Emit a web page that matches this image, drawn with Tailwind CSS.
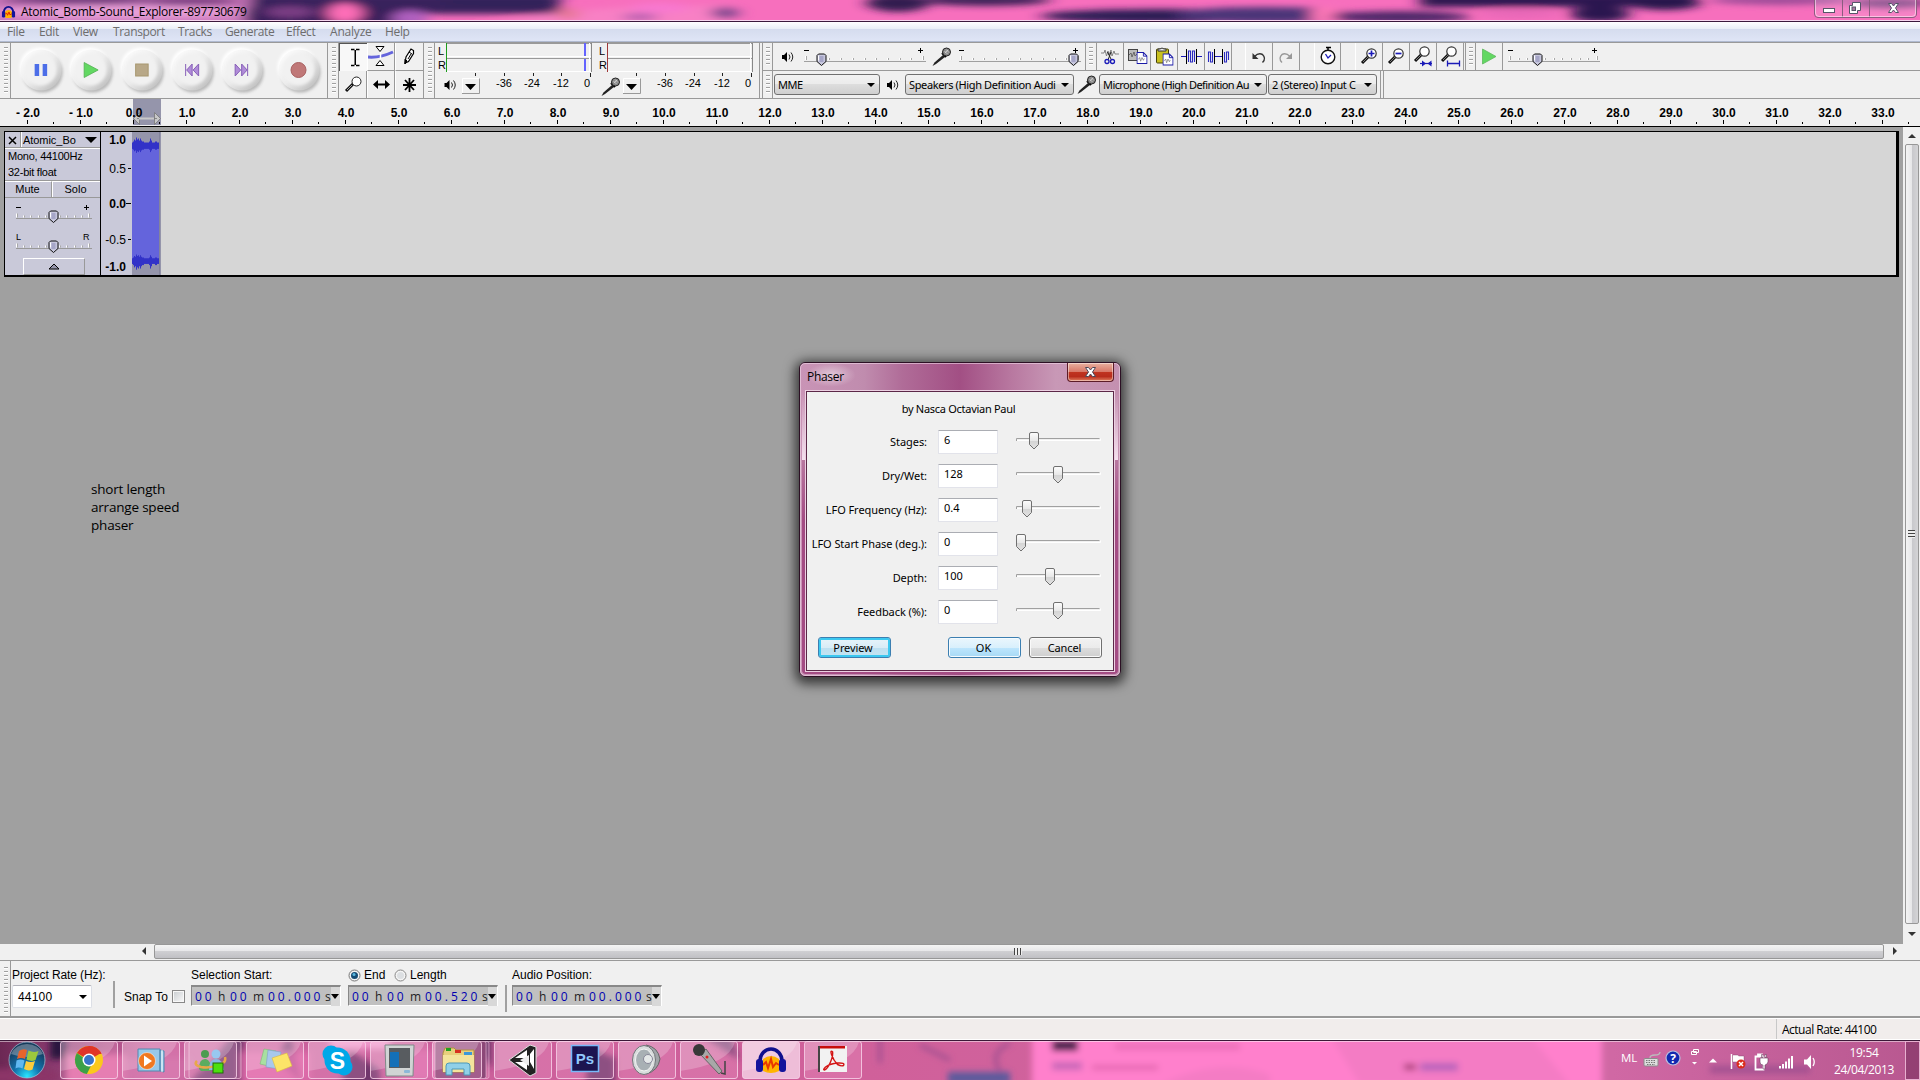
<!DOCTYPE html>
<html lang="en">
<head>
<meta charset="utf-8">
<title>Atomic_Bomb-Sound_Explorer-897730679</title>
<script src="https://cdn.jsdelivr.net/npm/@tailwindcss/browser@4"></script>
</head>
<body class="w-[1920px] h-[1080px] overflow-hidden relative flex flex-col bg-[#a0a0a0] font-['Liberation_Sans',Arial,sans-serif] text-black leading-none whitespace-nowrap">

<svg class="absolute w-0 h-0">
  <defs>
    <linearGradient id="gTask" x1="0" x2="1" y1="0" y2="0"><stop offset="0" stop-color="#6c2854"/><stop offset=".03" stop-color="#8c3c70"/><stop offset=".08" stop-color="#c8609c"/><stop offset=".45" stop-color="#d0609a"/><stop offset=".84" stop-color="#d068a4"/><stop offset="1" stop-color="#b85890"/></linearGradient>
    <filter id="b3" x="-5%" y="-50%" width="110%" height="200%"><feGaussianBlur stdDeviation="3"/></filter>
    <filter id="b7" x="-5%" y="-100%" width="110%" height="300%"><feGaussianBlur stdDeviation="8 3"/></filter>
    <filter id="b1" x="-20%" y="-20%" width="140%" height="140%"><feGaussianBlur stdDeviation="1.5"/></filter>
    <linearGradient id="gRim" x1="0" y1="0" x2="1" y2="1"><stop offset="0" stop-color="#fff"/><stop offset=".5" stop-color="#ececec"/><stop offset="1" stop-color="#b4b4b4"/></linearGradient>
    <linearGradient id="gThumb" x1="0" y1="0" x2="0" y2="1"><stop offset="0" stop-color="#fdfdfd"/><stop offset=".5" stop-color="#e8e8e8"/><stop offset=".5" stop-color="#d4d4d4"/><stop offset="1" stop-color="#e2e2e2"/></linearGradient>
    <radialGradient id="gOrb" cx=".5" cy=".95" r=".8"><stop offset="0" stop-color="#28e6ff"/><stop offset=".45" stop-color="#1274ae"/><stop offset="1" stop-color="#153a5c"/></radialGradient>
    <symbol id="disc" viewBox="0 0 50 50">
      <circle cx="26.500" cy="27.500" r="20" fill="#888" opacity=".55" filter="url(#b1)"/>
      <circle cx="23.500" cy="22.500" r="20" fill="#fff" filter="url(#b1)"/>
      <circle cx="25" cy="25" r="20.500" fill="url(#gRim)"/>
      <circle cx="24.500" cy="24.500" r="16" fill="#f1f1f1" filter="url(#b1)"/>
    </symbol>
    <symbol id="spk" viewBox="0 0 14 14">
      <path d="M1 5h2l3-3v10l-3-3h-2z" fill="#000"/><path d="M8 4.500q2 2.500 0 5M10 2.500q3.500 4.500 0 9" fill="none" stroke="#222"/>
    </symbol>
    <symbol id="mic" viewBox="0 0 20 20">
      <path d="M11 8l2 2L4 17L0.500 19L2.500 15.500z" fill="#222"/><path d="M10 6l4 4" stroke="#000" stroke-width="2"/>
      <circle cx="14.500" cy="5" r="4" fill="#888" stroke="#222"/><path d="M12.500 4l3 3M14 2.500l3 3M13 6l3-3" stroke="#ddd" stroke-width=".7"/>
    </symbol>
    <symbol id="mag" viewBox="0 0 27 27">
      <path d="M6 20l7-7" stroke="#111" stroke-width="3"/><path d="M7 19l5-5" stroke="#999" stroke-width=".8"/><circle cx="15.500" cy="10.500" r="4.700" fill="#fff" stroke="#333" stroke-width="1.200"/>
    </symbol>
    <symbol id="knob" viewBox="0 0 12 14">
      <path d="M1.500 3L3 1.500H9L10.500 3V9L6 13L1.500 9z" fill="#c6c6dc" stroke="#111"/><path d="M3 3v5" stroke="#fff"/><path d="M4 4.500h4M4 6.500h4M4 8.500h4" stroke="#7777a8" stroke-width=".8"/>
    </symbol>
    <symbol id="doc" viewBox="0 0 12 13"><path d="M.5.5h7l4 4v8h-11z" fill="#fff" stroke="#1a1aa8" stroke-width="1.200"/><path d="M7.500.5v4h4" fill="none" stroke="#1a1aa8"/><path d="M2 8l1.500-2 1 4 1.500-4 1.500 3 1-2" fill="none" stroke="#777" stroke-width=".8"/></symbol>
  </defs>
</svg>

<!-- title bar -->
<header class="relative h-[22px] shrink-0 overflow-hidden bg-[#f76fbd] border-b border-[#3c1a3c]">
  <svg class="absolute inset-0" width="1920" height="22">
    <g filter="url(#b7)">
      <rect x="-20" y="-6" width="270" height="40" fill="#cc78bc"/>
      <rect x="250" y="-6" width="310" height="20" fill="#38205c"/>
      <rect x="245" y="8" width="180" height="26" fill="#341a58"/>
      <ellipse cx="290" cy="12" rx="25" ry="6" fill="#7c3c84"/>
      <ellipse cx="345" cy="13" rx="18" ry="10" fill="#ff6eb8"/>
      <ellipse cx="410" cy="18" rx="18" ry="8" fill="#b060c0"/>
      <ellipse cx="80" cy="0" rx="80" ry="4" fill="#5c2c70"/>
      <ellipse cx="190" cy="1" rx="50" ry="4" fill="#6c3078"/>
      <ellipse cx="120" cy="12" rx="125" ry="6" fill="#e8a0d8"/>
      <path d="M470 30q80-26 260-24v24z" fill="#f880c4"/>
      <ellipse cx="500" cy="2" rx="60" ry="6" fill="#30205a"/>
      <ellipse cx="640" cy="17" rx="18" ry="4" fill="#b860b0"/>
      <ellipse cx="725" cy="13" rx="14" ry="6" fill="#804890"/>
      <ellipse cx="568" cy="14" rx="12" ry="6" fill="#e87898"/>
      <ellipse cx="660" cy="8" rx="30" ry="5" fill="#f878d0"/>
      <ellipse cx="898" cy="3" rx="32" ry="9" fill="#301a50"/>
      <ellipse cx="985" cy="0" rx="66" ry="6" fill="#3c2058"/>
      <ellipse cx="1160" cy="16" rx="120" ry="7" fill="#2c1c54"/>
      <ellipse cx="1265" cy="15" rx="90" ry="8" fill="#4c3478"/>
      <ellipse cx="1325" cy="15" rx="15" ry="8" fill="#ff78b8"/>
      <ellipse cx="1400" cy="17" rx="70" ry="6" fill="#4c2868"/>
      <rect x="1420" y="-6" width="275" height="13" fill="#2c1450"/>
      <ellipse cx="1520" cy="14" rx="40" ry="5" fill="#e868b8"/>
      <ellipse cx="1600" cy="14" rx="30" ry="8" fill="#2c1450"/>
      <ellipse cx="1665" cy="3" rx="36" ry="7" fill="#28124c"/>
      <ellipse cx="1780" cy="0" rx="70" ry="5" fill="#9c4c98"/>
      <ellipse cx="1890" cy="3" rx="40" ry="5" fill="#7a3c80"/>
    </g>
    <rect y="20" width="1920" height="1" fill="#f6d6ee"/>
    <path d="M1814.500 0v14q0 3.500 3.500 3.500h94q4.500 0 4.500-3.500v-14M1842.500 0v17M1869.500 0v17" fill="#fff" fill-opacity=".15" stroke="#8c5c80"/>
    <path d="M1815.500 0v13q0 3.500 3.500 3.500h93q3.500 0 3.500-3.500v-13" fill="none" stroke="#fff" stroke-opacity=".5"/>
    <rect x="1823.500" y="8.500" width="11" height="4" fill="#fff" stroke="#555568"/>
    <path d="M1852.500 2.500h8v8h-3v3h-8v-8h3z" fill="#fff" stroke="#555568"/><rect x="1852" y="7" width="3.500" height="3.500" fill="#a878a0" stroke="#555568"/>
    <path d="M1888.500 3.500h3l2 2.500l2-2.500h3l-3 4.500l3 4.500h-3l-2-2.500l-2 2.500h-3l3-4.500z" fill="#fff" stroke="#555568"/>
  </svg>
  <div class="relative flex items-center h-[21px] gap-[5px] pl-[1px] pt-[1px]">
    <svg width="15" height="15" viewBox="0 0 32 32"><path d="M6 18a10 12 0 0 1 20 0" fill="none" stroke="#10108c" stroke-width="4"/><path d="M8 17q8-8 16 0v11q-8 4-16 0z" fill="#ffb400"/><path d="M9 22l3-3 2 5 3-7 2 6 4-2" stroke="#e42000" stroke-width="2" fill="none"/><rect x="2" y="15" width="7" height="14" rx="3" fill="#14149c"/><rect x="23" y="15" width="7" height="14" rx="3" fill="#14149c"/></svg>
    <span class="font-['Open_Sans',sans-serif] text-[12px] tracking-[-0.270px] h-[15px] leading-[15px]">Atomic_Bomb-Sound_Explorer-897730679</span>
  </div>
</header>

<!-- menu -->
<nav class="h-[20px] shrink-0 flex items-center pl-[7px] text-[12px] text-[#6d6d6d] font-['Open_Sans',sans-serif] tracking-[-0.350px] bg-[linear-gradient(#fff,#e9eef6_7px,#d5dcee_7px,#dfe5f6_19px,#b0bad0_19px)]">
  <span class="w-[32px]">File</span><span class="w-[34px]">Edit</span><span class="w-[40px]">View</span><span class="w-[65px]">Transport</span><span class="w-[47px]">Tracks</span><span class="w-[61px]">Generate</span><span class="w-[44px]">Effect</span><span class="w-[55px] tracking-[-0.200px]">Analyze</span><span>Help</span>
</nav>

<!-- toolbars -->
<section class="h-[57px] shrink-0 flex bg-[#f0f0f0] border-y border-[#999]">
  <div class="w-[11px] border-r border-[#999] pl-[4px] py-[4px]"><div class="w-[4px] h-[47px] bg-[repeating-linear-gradient(#a0a0a0_0_1px,#fff_1px_2px,#f0f0f0_2px_4px)]"></div></div>
  <div class="w-[317px] border-r border-[#999] flex pl-[5px] pt-[2px]">
    <svg class="w-[50.300px] h-[50px]" viewBox="0 0 50 50"><use href="#disc"/><path d="M18.500 19h4.500v12h-4.500zM26.500 19h4.500v12h-4.500z" fill="#4c6ee8"/></svg>
    <svg class="w-[50.300px] h-[50px]" viewBox="0 0 50 50"><use href="#disc"/><path d="M18 17.500L32 25L18 32.500z" fill="#62d862" stroke="#50b050" stroke-width=".8"/></svg>
    <svg class="w-[50.300px] h-[50px]" viewBox="0 0 50 50"><use href="#disc"/><rect x="18.500" y="19" width="12.500" height="12" fill="#b8a888" stroke="#a89870"/></svg>
    <svg class="w-[50.300px] h-[50px]" viewBox="0 0 50 50"><use href="#disc"/><path d="M18.500 19v12M25 19L19.500 25L25 31zM31.500 19L26 25L31.500 31z" fill="#b08cd8" stroke="#8860b8"/></svg>
    <svg class="w-[50.300px] h-[50px]" viewBox="0 0 50 50"><use href="#disc"/><path d="M30.500 19v12M18 19L23.500 25L18 31zM24.500 19L30 25L24.500 31z" fill="#b08cd8" stroke="#8860b8"/></svg>
    <svg class="w-[50px] h-[50px] ml-[7px]" viewBox="0 0 50 50"><use href="#disc"/><circle cx="24.500" cy="25" r="7.500" fill="#c07878" stroke="#a86060"/></svg>
  </div>
  <div class="w-[11px] border-r border-[#999] pl-[4px] py-[4px]"><div class="w-[4px] h-[47px] bg-[repeating-linear-gradient(#a0a0a0_0_1px,#fff_1px_2px,#f0f0f0_2px_4px)]"></div></div>
  <!-- tools -->
  <div class="w-[85px] grid grid-cols-3 grid-rows-2 border-r border-[#999]">
    <div class="bg-[#f8f8f8] border-t border-l border-[#555] flex"><svg width="27" height="27"><path d="M11 5.500h3.500M16 5.500h3.500M15.250 6v15M11 21.500h3.500M16 21.500h3.500" stroke="#000" stroke-width="1.500" fill="none"/></svg></div>
    <div class="border-r border-b border-[#999] border-l border-l-white flex"><svg width="27" height="27"><path d="M0 14q12 1 25-5" stroke="#6464dc" stroke-width="3" fill="none"/><path d="M8 3.500h8l-4 5zM8 22.500h8l-4-5z" fill="#fff" stroke="#000"/><path d="M12.500 9v7" stroke="#fff" stroke-width="1.500"/></svg></div>
    <div class="border-b border-[#999] border-l border-l-white flex"><svg width="27" height="27"><path d="M9 20l1-6 5-8 2.500 1.500v3l-5 8z" fill="#fff" stroke="#000" stroke-width="1.200"/><path d="M9 21v-5l2 2zM13 9l3 2M12 16l3-5" stroke="#000"/></svg></div>
    <div class="border-r border-[#999] flex"><svg width="27" height="27"><path d="M7 20l7-7" stroke="#111" stroke-width="3"/><path d="M8 19l5-5" stroke="#ccc" stroke-width=".8"/><circle cx="17.500" cy="10.500" r="4.500" fill="#fff" stroke="#222"/></svg></div>
    <div class="border-r border-[#999] border-l border-l-white flex"><svg width="27" height="27"><path d="M7 13.500h13" stroke="#000" stroke-width="2"/><path d="M5 13.500l5-4.500v9zM22 13.500l-5-4.500v9z"/></svg></div>
    <div class="border-l border-white flex"><svg width="27" height="27"><path d="M13.500 7v14M7 14h13M9 9l9 10M18 9l-9 10" stroke="#000" stroke-width="1.800"/></svg></div>
  </div>
  <div class="w-[11px] border-r border-[#999] pl-[4px] py-[4px]"><div class="w-[4px] h-[47px] bg-[repeating-linear-gradient(#a0a0a0_0_1px,#fff_1px_2px,#f0f0f0_2px_4px)]"></div></div>
  <!-- meters -->
  <div class="w-[325px] border-r border-[#999] flex" id="meters"></div>
  <!-- right-hand toolbars -->
  <div class="flex-1 flex flex-col ml-[2px] border-l border-[#999]">
    <div class="h-[28px] flex border-b border-[#999]">
      <div class="w-[10px] border-r border-[#999] pl-[3px] pt-[4px]"><div class="w-[4px] h-[19px] bg-[repeating-linear-gradient(#a0a0a0_0_1px,#fff_1px_2px,#f0f0f0_2px_4px)]"></div></div>
      <div class="w-[313px] border-r border-[#999] flex items-center pl-[8px]">
        <svg width="15" height="14"><use href="#spk" width="14" height="14"/></svg>
        <div class="ml-[8px]" data-slider="122,17.5"></div>
        <svg class="ml-[6px]" width="20" height="20"><use href="#mic" width="20" height="20"/></svg>
        <div class="ml-[7px]" data-slider="122,114.500"></div>
      </div>
      <div class="w-[11px] border-r border-[#999] pl-[3px] pt-[4px]"><div class="w-[4px] h-[19px] bg-[repeating-linear-gradient(#a0a0a0_0_1px,#fff_1px_2px,#f0f0f0_2px_4px)]"></div></div>
      <div class="flex">
        <div class="w-[27px] border-r border-[#999]"><svg width="26" height="27"><path d="M4 10h3l1-3 1.500 6 1.500-5 1 4 2-5 1 6 2-5 1 3h4" stroke="#777" fill="none" stroke-width=".9"/><path d="M14 9l-3 8M10.500 9l4 8" stroke="#222"/><circle cx="10" cy="18.500" r="2" fill="none" stroke="#1a1ab8" stroke-width="1.300"/><circle cx="15.500" cy="18.500" r="2" fill="none" stroke="#1a1ab8" stroke-width="1.300"/></svg></div>
        <div class="w-[27px] border-r border-[#999]"><svg width="26" height="27"><rect x="4.500" y="6.500" width="9" height="11" fill="#bbb" stroke="#444"/><path d="M5 12l2-2 1 4 2-5 1 4 2-2" stroke="#666" fill="none"/><use href="#doc" x="12.500" y="8.500" width="11" height="13"/></svg></div>
        <div class="w-[27px] border-r border-[#999]"><svg width="26" height="27"><rect x="5.500" y="6" width="12" height="14" rx="1" fill="#c8c020" stroke="#44400a"/><path d="M7 8h8v-2h-2q-2-2-4 0h-2z" fill="#eee" stroke="#333"/><use href="#doc" x="11.500" y="10" width="11" height="13"/></svg></div>
        <div class="w-[27px] border-r border-[#999]"><svg width="26" height="27"><path d="M3 13.500h5M19 13.500h5" stroke="#1a1ab8"/><path d="M8.500 6v15M18.500 6v15" stroke="#000"/><path d="M10.500 19v-11h2v11h2v-11h2v11" stroke="#2a2ac0" fill="none" stroke-width="1.100"/></svg></div>
        <div class="w-[27px] border-r border-[#999]"><svg width="26" height="27"><path d="M9 13.500h8" stroke="#1a1ab8"/><path d="M9.500 6v15M17.500 6v15" stroke="#000"/><path d="M3.500 19v-10h2v10h2v-10M19.500 9v10h2v-10h2v8" stroke="#2a2ac0" fill="none" stroke-width="1.100"/></svg></div>
        <div class="w-[13px]"></div>
        <div class="w-[28px] border-x border-[#999] border-l-white"><svg width="26" height="27"><path d="M8.500 13.500q4-4 8-2q4 4 0 8" stroke="#333" fill="none" stroke-width="1.400"/><path d="M6.500 10v6h6z" fill="#333"/></svg></div>
        <div class="w-[27px] border-r border-[#999]"><svg width="26" height="27"><path d="M17 13.500q-4-4-8-2q-4 4 0 8" stroke="#999" fill="none" stroke-width="1.400"/><path d="M19 10v6h-6z" fill="#999"/></svg></div>
        <div class="w-[14px]"></div>
        <div class="w-[27px] border-x border-[#999] border-l-white"><svg width="25" height="27"><path d="M13 4v4M11 4.500h5" stroke="#000" stroke-width="1.500"/><circle cx="13" cy="14" r="6.800" fill="#fff" stroke="#111" stroke-width="1.400"/><path d="M10.500 11l2.500 4 3-3" stroke="#1a1ab8" fill="none" stroke-width="1.300"/></svg></div>
        <div class="w-[14px]"></div>
        <div class="w-[28px] border-x border-[#999] border-l-white"><svg width="26" height="27"><use href="#mag" width="27" height="27"/><path d="M12.500 10.500h6M15.500 7.500v6" stroke="#1a1ab8" stroke-width="1.700"/></svg></div>
        <div class="w-[27px] border-r border-[#999]"><svg width="26" height="27"><use href="#mag" width="27" height="27"/><path d="M12.500 10.500h6" stroke="#1a1ab8" stroke-width="1.700"/></svg></div>
        <div class="w-[27px] border-r border-[#999]"><svg width="26" height="27"><use href="#mag" x="-1" y="-2" width="27" height="27"/><path d="M10 20.500h12" stroke="#1a1ab8" stroke-width="1.200"/><path d="M16 20.500l-4-3v6zM17.500 20.500l4-3v6z" fill="#1a1ab8"/></svg></div>
        <div class="w-[27px] border-r border-[#999]"><svg width="26" height="27"><use href="#mag" x="-1" y="-2" width="27" height="27"/><path d="M10.500 20.500h12M10.500 17.500v6M22.500 17.500v6" stroke="#1a1ab8" stroke-width="1.300"/></svg></div>
      </div>
      <div class="w-[11px] ml-[1px] border-x border-[#999] pl-[3px] pt-[4px]"><div class="w-[4px] h-[19px] bg-[repeating-linear-gradient(#a0a0a0_0_1px,#fff_1px_2px,#f0f0f0_2px_4px)]"></div></div>
      <div class="w-[27px] border-r border-[#999]"><svg width="26" height="27"><path d="M6.500 6L20 13.500L6.500 21z" fill="#62d862" stroke="#60b860" stroke-width=".8"/></svg></div>
      <div class="ml-[5px]" data-slider="92,29.500"></div>
    </div>
    <div class="h-[27px] flex items-center text-[11px] font-['Noto_Sans',sans-serif]">
      <div class="w-[10px] h-full border-r border-[#999] pl-[3px] pt-[4px]"><div class="w-[4px] h-[19px] bg-[repeating-linear-gradient(#a0a0a0_0_1px,#fff_1px_2px,#f0f0f0_2px_4px)]"></div></div>
      <div class="ml-[1px] w-[106px] h-[21px] rounded-[3px] border border-[#707070] bg-[linear-gradient(#f2f2f2,#ebebeb_50%,#dddddd_50%,#cfcfcf)] flex items-center pl-[3px]"><span class="w-[89px] leading-[16px] tracking-[-0.500px]">MME</span><svg width="8" height="4"><path d="M0 0h8l-4 4z"/></svg></div>
      <svg class="ml-[6px]" width="14" height="14"><use href="#spk" width="14" height="14"/></svg>
      <div class="ml-[5px] w-[169px] h-[21px] rounded-[3px] border border-[#707070] bg-[linear-gradient(#f2f2f2,#ebebeb_50%,#dddddd_50%,#cfcfcf)] flex items-center pl-[3px]"><span class="w-[145px] mr-[7px] leading-[16px] tracking-[-0.370px]">Speakers (High Definition Audi</span><svg width="8" height="4"><path d="M0 0h8l-4 4z"/></svg></div>
      <svg class="ml-[3px]" width="20" height="20"><use href="#mic" width="20" height="20"/></svg>
      <div class="ml-[2px] w-[168px] h-[21px] rounded-[3px] border border-[#707070] bg-[linear-gradient(#f2f2f2,#ebebeb_50%,#dddddd_50%,#cfcfcf)] flex items-center pl-[3px]"><span class="w-[145px] mr-[6px] leading-[16px] tracking-[-0.580px]">Microphone (High Definition Au</span><svg width="8" height="4"><path d="M0 0h8l-4 4z"/></svg></div>
      <div class="ml-[1px] w-[109px] h-[21px] rounded-[3px] border border-[#707070] bg-[linear-gradient(#f2f2f2,#ebebeb_50%,#dddddd_50%,#cfcfcf)] flex items-center pl-[3px]"><span class="w-[86px] mr-[6px] leading-[16px] tracking-[-0.350px]">2 (Stereo) Input C</span><svg width="8" height="4"><path d="M0 0h8l-4 4z"/></svg></div>
      <div class="ml-[3px] w-[4px] h-full border-x border-[#999]"></div>
    </div>
  </div>
</section>

<!-- time ruler -->
<section class="relative h-[28px] shrink-0 bg-[#f0f0f0] border-b border-black">
  <div class="absolute left-[133px] top-0 w-[28px] h-[26px] bg-[#9595ab]"></div>
  <svg class="absolute inset-0" width="1920" height="27" id="ticks"></svg>
  <div class="relative flex pl-[1.500px] pt-[8px] text-[12px] font-bold" id="labels"></div>
</section>

<!-- track area -->
<main class="h-[817px] shrink-0 flex">
  <div class="w-[1903px] pt-[4px] pl-[4px]">
    <div class="w-[1895px] h-[146px] border-t border-l border-black border-b-2 border-r-[3px] flex">
      <div class="w-[95px] bg-[#c9c9d9] flex flex-col text-[11px]">
        <div class="h-[16px] flex border-b border-[#999]">
          <div class="w-[16px] border-r border-[#999] flex items-center justify-center pt-[1px]"><svg width="9" height="9"><path d="M1 1l7 7M8 1l-7 7" stroke="#000" stroke-width="1.500"/></svg></div>
          <div class="flex-1 border-l border-white flex items-center pl-[1px] pt-[1px]"><span class="w-[62px] text-[11px] tracking-[-0.050px]">Atomic_Bo</span><svg width="12" height="7"><path d="M0 0h12l-6 6z"/></svg></div>
        </div>
        <div class="h-[33px] pl-[3px] pt-[1px] border-b border-[#999] border-t border-t-white tracking-[-0.250px]"><p class="h-[16px] leading-[13px]">Mono, 44100Hz</p><p class="leading-[13px]">32-bit float</p></div>
        <div class="h-[17px] flex border-b border-[#999] text-center leading-[15px]"><div class="w-[47px] border-r border-[#999] border-t border-t-white pr-[1px]">Mute</div><div class="flex-1 border-l border-white border-t pr-[2px]">Solo</div></div>
        <svg width="95" height="60" class="h-[60px]" id="trackSliders"></svg>
        <div class="ml-[18px] w-[62px] h-[17px] border border-white border-r-[#999] border-b-[#999] flex items-center justify-center"><svg width="12" height="7"><path d="M1 6h10l-5-5z" fill="#9595ab" stroke="#000"/></svg></div>
      </div>
      <div class="relative w-[32px] border-l border-black bg-[#c9c9d9] text-[12px] text-right pr-[6px]">
        <p class="pt-[2px] font-bold">1.0</p><p class="pt-[17px]">0.5</p><p class="pt-[23px] font-bold">0.0</p><p class="pt-[24px]">-0.5</p><p class="pt-[15px] font-bold">-1.0</p>
        <div class="absolute right-[1px] top-[36px] w-[3px] h-px bg-black"></div><div class="absolute right-[1px] top-[71px] w-[5px] h-px bg-black"></div><div class="absolute right-[1px] top-[107px] w-[3px] h-px bg-black"></div>
      </div>
      <svg width="29" height="143" id="wave" class="shrink-0 bg-[#9595ab]"></svg>
      <div class="flex-1 bg-[#d6d6d6]"></div>
    </div>
  </div>
  <div class="w-[17px] bg-[#f0f0f0] flex flex-col items-center">
    <svg width="17" height="17"><path d="M5 11h8l-4-4z" fill="#333"/></svg>
    <div class="w-[14px] h-[780px] rounded-[2px] border border-[#979797] bg-[linear-gradient(90deg,#f4f4f4,#e6e6e8_50%,#c8c8cc_50%,#d4d4d6)] flex items-center justify-center"><div class="w-[7px] h-[8px] bg-[repeating-linear-gradient(#444_0_1px,#eee_1px_3px)]"></div></div>
    <svg width="17" height="17"><path d="M5 8h8l-4 4z" fill="#333"/></svg>
  </div>
</main>
<div class="h-[16px] shrink-0 bg-[#f0f0f0] flex pl-[137px]">
  <svg width="17" height="15"><path d="M9 3v8l-4-4z" fill="#333"/></svg>
  <div class="w-[1730px] h-[15px] rounded-[2px] border border-[#979797] bg-[linear-gradient(#f4f4f4,#e6e6e8_50%,#cfcfd2_50%,#c0c0c4)] flex items-center justify-center pr-[3px]"><div class="w-[8px] h-[7px] bg-[repeating-linear-gradient(90deg,#444_0_1px,#eee_1px_3px)]"></div></div>
  <svg width="17" height="15"><path d="M9 3v8l4-4z" fill="#333"/></svg>
</div>

<!-- selection toolbar -->
<section class="h-[58px] shrink-0 bg-[#f0f0f0] border-t border-b-2 border-[#999] flex text-[12px]">
  <div class="w-[11px] border-r border-[#999] pl-[4px] pt-[6px]"><div class="w-[4px] h-[46px] bg-[repeating-linear-gradient(#a0a0a0_0_1px,#fff_1px_2px,#f0f0f0_2px_4px)]"></div></div>
  <div class="w-[102px] pl-[1px] pt-[8px] tracking-[-0.100px]"><p>Project Rate (Hz):</p>
    <div class="mt-[4px] w-[80px] h-[23px] bg-white border border-[#dcdfe6] border-t-[#b0b0b8] rounded-[2px] flex items-center pl-[5px]"><span class="w-[61px] tracking-[0.200px]">44100</span><svg width="8" height="4"><path d="M0 0h8l-4 4z"/></svg></div></div>
  <div class="w-[78px] flex items-center pt-[16px]"><div class="w-[2px] h-[27px] -mt-[5px] bg-[#a0a0a0]"></div><span class="w-[48px] ml-[9px]">Snap To</span><div class="w-[13px] h-[13px] border border-[#888] bg-[linear-gradient(135deg,#c8ccd0,#fafafa)] outline outline-1 outline-[#f8f8f8] outline-offset-[-2px]"></div></div>
  <div class="w-[157px] pt-[8px]"><p>Selection Start:</p><div class="mt-[4px]" data-time="00.000"></div></div>
  <div class="w-[157px] pt-[8px]"><div class="flex items-center h-[12px]"><svg width="13" height="13" class="mr-[3px]"><circle cx="6.500" cy="6.500" r="5.500" fill="#f4f4f4" stroke="#777"/><circle cx="6.500" cy="6.500" r="3.500" fill="#154c74"/><circle cx="6" cy="5.500" r="1.500" fill="#58b8e0"/></svg><span class="w-[30px]">End</span><svg width="13" height="13" class="mr-[3px]"><circle cx="6.500" cy="6.500" r="5.500" fill="#f4f4f4" stroke="#888"/><circle cx="6.500" cy="6.500" r="3.500" fill="#dcdfe2"/></svg>Length</div><div class="mt-[4px]" data-time="00.520"></div></div>
  <div class="w-[7px] pt-[24px]"><div class="w-[2px] h-[27px] bg-[#a0a0a0]"></div></div>
  <div class="pt-[8px]"><p>Audio Position:</p><div class="mt-[4px]" data-time="00.000"></div></div>
</section>
<footer class="h-[22px] shrink-0 bg-[#f1edec] border-y border-white flex justify-end"><div class="w-[144px] border-l border-[#c8c8c8] pl-[5px] text-[12px] leading-[21px] font-['Open_Sans',sans-serif] tracking-[-0.500px]">Actual Rate: 44100</div></footer>

<!-- taskbar -->
<section class="relative h-[40px] shrink-0 overflow-hidden">
  <svg class="absolute inset-0" width="1920" height="40">
    <rect width="1920" height="40" fill="url(#gTask)"/>
    <g filter="url(#b3)">
      <rect x="1032" y="-10" width="570" height="60" fill="#ff80cc"/>
      <path d="M1330 -5h200l40 50h-210z" fill="#f47cc4"/>
      <path d="M1160 45q60-30 110-10v15z" fill="#f47cc4"/>
      <rect x="50" y="-5" width="16" height="24" fill="#2c1440"/>
      <ellipse cx="20" cy="36" rx="40" ry="8" fill="#8c3468"/>
      <rect x="66" y="14" width="60" height="30" fill="#e070a8"/>
      <path d="M185 45l25-22l22-28h12v50zM350 10l30 20v20h-40zM470-5l22 35v-35zM590 8l25 10v30h-30zM290-5l-15 24l28 25zM700 -5l30 0l10 25z" fill="#5a2a60" opacity=".8"/>
      <rect x="240" y="12" width="70" height="30" fill="#e870b0" opacity=".7"/><rect x="330" y="-5" width="60" height="14" fill="#f098cc"/><rect x="120" y="18" width="70" height="24" fill="#d070a8" opacity=".6"/><rect x="400" y="10" width="70" height="30" fill="#e070b0" opacity=".7"/>
      <rect x="1052" y="0" width="26" height="11" fill="#3a1c44"/>
      <rect x="1052" y="22" width="30" height="8" fill="#c868b8"/><rect x="1092" y="25" width="66" height="5" fill="#e468b0"/>
      <rect x="1115" y="3" width="125" height="7" fill="#ec70b8"/>
      <rect x="1404" y="24" width="12" height="6" fill="#a83c78"/><rect x="1420" y="23" width="38" height="8" fill="#b864bc"/>
      <path d="M1010 3q-22 10-10 28M920 5l30 15M880-5v28" stroke="#a05090" stroke-width="4" fill="none"/>
      <rect x="948" y="32" width="62" height="12" fill="#5c5a9c"/>
      <rect x="1710" y="26" width="100" height="7" fill="#a05090"/>
    </g>
    <rect width="1920" height="1" fill="#3c1838"/><rect y="1" width="1920" height="1" fill="#fff" opacity=".5"/>
    <rect x="1905.500" y="1.500" width="14" height="38" fill="#7c3060" fill-opacity=".6" stroke="#e8b0d0"/>
  </svg>
  <div class="relative flex">
    <svg width="60" height="40"><circle cx="27" cy="20" r="18" fill="url(#gOrb)" stroke="#a8c4d8" stroke-opacity=".7"/><path d="M11 14a17 15 0 0 1 32 0q-16 6-32 0z" fill="#fff" opacity=".3"/>
      <path d="M19 11q4-3 8-1l-2 9q-4-2-8 0z" fill="#e8642c"/><path d="M28.500 10.500q5 2.500 10 .5l-3 9q-4 2-9-.5z" fill="#9cc83c"/><path d="M16.500 20.500q4-2 8 0l-2 8q-4-2-7 0z" fill="#60b8f0"/><path d="M26 21q5 2 9 0l-2.500 8.500q-4 2-8.500-.5z" fill="#fccc3c"/></svg>
    <div class="flex gap-[4px]" id="tasks"></div>
  </div>
  <div class="absolute right-0 top-0 h-[40px] w-[300px] text-white font-['Open_Sans',sans-serif] text-[12px]">
    <svg class="absolute inset-0" width="300" height="40">
      <path d="M34 17q0-3 5-3t5-3" stroke="#bbb" fill="none" stroke-width="1.300" transform="translate(-4 1)"/><rect x="24" y="18.500" width="14" height="7.500" rx="1" fill="#ddd" stroke="#8c8c8c"/><path d="M26 20.500h10M26 22.500h10M27 24.500h8" stroke="#777" stroke-dasharray="1.500 1"/>
      <circle cx="53" cy="18" r="7" fill="#1228b0" stroke="#b8c0e0" stroke-width="1.200"/><text x="53" y="22.500" text-anchor="middle" font-size="12" font-weight="bold" fill="#fff">?</text>
      <path d="M73.500 9.500h5v3h-5zM71.500 11.500h5v3h-5z" fill="#b86090" stroke="#fff"/><path d="M72 22h5l-2.500 2.500zM89 22.500h8l-4-4z" fill="#fff"/>
      <path d="M111.500 14v15" stroke="#fff" stroke-width="1.500"/><path d="M112.500 15h5l1.500 1h5v7h-5l-1.500-1h-5z" fill="#fff" stroke="#7c4068" stroke-width=".4"/><circle cx="121" cy="24" r="4.500" fill="#dc2c1c"/><path d="M119 22l4 4M123 22l-4 4" stroke="#fff" stroke-width="1.500"/>
      <path d="M135.500 16.500h8v13h-8zM138 14.500h4v2h-4z" fill="none" stroke="#fff" stroke-width="1.800"/><path d="M140 18h8v4q-1 3-3 3v4h-2v-4q-3 0-3-3zM141.500 14.500h1.500v3h-1.500zM145 14.500h1.500v3h-1.500z" fill="#fff" stroke="#6c3c60" stroke-width=".6"/>
      <path d="M159 26h2v2.500h-2zM162 24h2v4.500h-2zM165 21.500h2v7h-2zM168 18.500h2v10h-2zM171 16h2v12.500h-2z" fill="#fff"/>
      <path d="M184 19.500h3l4-4.500v14l-4-4.500h-3z" fill="#fff"/><path d="M193 18q2.500 4 0 8" stroke="#fff" fill="none" stroke-width="1.300"/>
    </svg>
    <div class="relative flex h-[40px]"><span class="w-[195px] pl-[1px] pt-[12px] text-[11.500px]">ML</span><div class="w-[98px] text-center pt-[4px] leading-[17px] tracking-[-0.350px]"><p>19:54</p><p>24/04/2013</p></div></div>
  </div>
</section>

<!-- note on the desktop -->
<div class="absolute left-[91px] top-[480px] text-[13.500px] leading-[18px] font-['Open_Sans',sans-serif] tracking-[-0.200px]">short length<br>arrange speed<br>phaser</div>

<!-- Phaser dialog -->
<div class="absolute left-[799px] top-[362px] w-[322px] h-[315px] rounded-[6px] border border-[#2c1024] p-[6px] pt-0 shadow-[0_3px_12px_4px_rgba(0,0,0,0.65)] bg-[linear-gradient(90deg,#c994b6,#c08cae_20%,#b06c98_32%,#a24f84_50%,#b878a0_66%,#c898b6_80%,#c490b0)] outline outline-1 outline-[#f0d8e8]/60 outline-offset-[-2px]">
  <div class="absolute inset-x-[2px] top-[97px] bottom-[2px] bg-[linear-gradient(#b878a0,#a44c84_60px,#a44c84)] rounded-b-[4px]"></div>
  <div class="absolute inset-x-[2px] top-[30px] h-[67px] bg-[linear-gradient(#c898b800,#f4e0ee)]"></div>
  <div class="relative h-[28px] flex justify-between font-['Open_Sans',sans-serif] text-[12px]"><span class="pt-[6px] pl-[1px] leading-[16px] tracking-[-0.300px] pr-3 h-[24px] bg-[radial-gradient(ellipse_at_center,rgba(255,255,255,.5),transparent_70%)]">Phaser</span>
    <div class="w-[47px] h-[19px] rounded-b-[4px] border border-t-0 border-[#5c1c28] bg-[linear-gradient(#e8b0a0,#d87868_48%,#c03420_50%,#b82c1c_75%,#e08060)] flex justify-center shadow-[inset_0_0_0_1px_rgba(255,255,255,.45)]"><svg width="13" height="13" class="mt-[3px]"><path d="M1.500 1.500h3l2 2.500l2-2.500h3l-3 4.500l3 4.500h-3l-2-2.500l-2 2.500h-3l3-4.500z" fill="#fff" stroke="#4c4858"/></svg></div></div>
  <div class="relative h-[280px] border border-[#5c2848] bg-[#f0f0f0] outline outline-1 outline-[#ecd0e2] text-[11px] font-['Noto_Sans',sans-serif] flex flex-col">
    <p class="text-center pt-[9px] leading-[16px] tracking-[-0.280px] pr-[3px]">by Nasca Octavian Paul</p>
    <div class="mt-[13px] flex flex-col gap-[10px]" id="rows"></div>
    <div class="mt-[13px] flex pl-[11px] leading-[19px] text-center">
      <div class="w-[73px] h-[21px] rounded-[3px] border border-[#3c7fb1] bg-[linear-gradient(#e8f4fa,#d8ecf6_50%,#bcdff0_50%,#c4e4f2)] shadow-[inset_0_0_0_2px_#3cc8f0] pr-[3px] tracking-[-0.100px]">Preview</div>
      <div class="ml-[57px] w-[73px] h-[21px] rounded-[3px] border border-[#3c7fb1] bg-[linear-gradient(#eaf6fd,#d9f0fc_50%,#bee6fd_50%,#a7d9f5)] shadow-[inset_0_0_0_1px_#f4fbff] pr-[2px]">OK</div>
      <div class="ml-[8px] w-[73px] h-[21px] rounded-[3px] border border-[#707070] bg-[linear-gradient(#f2f2f2,#ebebeb_50%,#dddddd_50%,#cfcfcf)] shadow-[inset_0_0_0_1px_#fafafa] pr-[2px] tracking-[-0.100px]">Cancel</div>
    </div>
  </div>
</div>

<script>
const $ = s => document.querySelector(s);
const ticks = (x0, x1, n, y) => Array.from({length: n + 1}, (_, i) => {
  const x = Math.round(x0 + (x1 - x0) * i / n) + .5, h = i % n ? 2 : 4;
  return `<path d="M${x} ${y - h}v${h}" stroke="#a8a8a8"/><path d="M${x - 1} ${y - h}v${h}" stroke="#fff"/>`;
}).join('');

// mixer and transcription sliders
document.querySelectorAll('[data-slider]').forEach(el => {
  const [w, k] = el.dataset.slider.split(',').map(Number);
  el.innerHTML = `<svg width="${w}" height="27" class="overflow-visible"><path d="M0 18.500h${w}" stroke="#a0a0a0"/>${ticks(2, w - 3, 10, 17)}
    <path d="M0 7.500h5M${w - 8} 7.500h5M${w - 5.500} 5v5" stroke="#000"/><use href="#knob" x="${k - 6}" y="9.500" width="12" height="14"/></svg>`;
});
$('#trackSliders').innerHTML = [20.500, 50.500].map(y => `<g><path d="M11 ${y}h76" stroke="#999"/>${ticks(12, 84, 10, y - 1)}<use href="#knob" x="42.500" y="${y - 9}" width="12" height="14"/></g>`).join('')
  + '<path d="M11 9.500h5M79 9.500h5M81.500 7v5" stroke="#000"/><text x="11" y="42" font-size="9">L</text><text x="78" y="42" font-size="9">R</text>';

// level meters
$('#meters').innerHTML = [['#1c9c1c', true], ['#a03838', false]].map(([c, out]) => `<svg width="161" height="55" font-size="11">
  <text x="3" y="12">L</text><text x="3" y="26">R</text>
  <path d="M12 .5h144M12 15.500h144" stroke="#999"/><path d="M12 13.500h144M12 28.500h144" stroke="#fff"/>
  <path d="M11.500 0v29" stroke="${c}"/>${out ? '<path d="M150 0v13M150 16v12" stroke="#6464ff" stroke-width="2"/>' : ''}
  <path d="M156.500 0v29" stroke="#888"/><path d="M154.500 0v29" stroke="#fff"/>
  <path d="M40.500 30v3M69.500 30v3M98.500 30v3M126.500 30v3M155.500 30v4" stroke="#222"/>
  <text x="61" y="44">-36</text><text x="89" y="44">-24</text><text x="118" y="44">-12</text><text x="149" y="44">0</text>
  ${out ? '<use href="#spk" x="8.500" y="35" width="14" height="14"/>' : '<use href="#mic" x="5" y="34" width="20" height="20"/>'}
  <path d="M27.500 50.500v-15h17" fill="none" stroke="#fff"/><path d="M27 50.500h17.500v-15" fill="none" stroke="#999"/><path d="M30 41h11l-5.500 6z"/></svg>`).join('');

// time ruler
let t = '', l = '';
for (let k = -2; k <= 33; k++) {
  const x = Math.round(134 + 53 * k) - .5;
  t += `<path d="M${x} 21v4M${x + 26} 23v2" stroke="#000"/>`;
  l += `<span class="w-[53px] shrink-0 text-center">${k < 0 ? '- ' + -k : k}.0</span>`;
}
$('#ticks').innerHTML = t + '<path d="M137 19.500h20M133.500 19.500l6-6v12zM160.500 19.500l-6-6v12z" fill="#c8c8c8" stroke="#777" stroke-width=".8"/><path d="M139 19.500h15" stroke="#c8c8c8" stroke-width="2"/>';
$('#labels').innerHTML = l;

// waveform
const amp = [3,4,6,5,8,6,7,5,7,5,4,4,3,3,3,3,3,4,7,5,3,3,3,4,4,3,3];
let w = '<rect x="0" y="14" width="27" height="114" fill="#6464dc"/>';
amp.forEach((a, i) => w += `<path d="M${i + .5} ${13.500 - a}v${a * 1.800 + 1}M${i + .5} ${128.500 - a * .75}v${a * 1.900}" stroke="#3232c8"/>`);
$('#wave').innerHTML = w + '<path d="M27.500 0v143" stroke="#84849c"/>';

// time fields
document.querySelectorAll('[data-time]').forEach(el => el.innerHTML = `<div class="w-[150px] h-[21px] bg-[#c0c0c0] border border-t-2 border-[#888] border-b-white border-r-white flex items-center pl-[3px] text-[12px] text-[#0000b0] font-['Open_Sans',sans-serif]">
  <span class="tracking-[3px] w-[23px] pt-[1px]">00</span><span class="w-[12px] pt-[1px] text-[#222]">h</span><span class="tracking-[3px] w-[23px] pt-[1px]">00</span><span class="w-[15px] pt-[1px] text-[#222]">m</span><span class="tracking-[3px] w-[57px] pt-[1px]">${el.dataset.time}</span><span class="w-[6px] pt-[1px] text-[#222]">s</span><span class="w-[9px] h-[19px] bg-[#d8d8d8] flex items-center"><svg width="8" height="5"><path d="M0 0h8l-4 5z"/></svg></span></div>`);

// effect parameters: label, value, thumb centre
$('#rows').innerHTML = [['Stages:', '6', 18], ['Dry/Wet:', '128', 42], ['LFO Frequency (Hz):', '0.4', 11], ['LFO Start Phase (deg.):', '0', 5], ['Depth:', '100', 34], ['Feedback (%):', '0', 42]].map(([n, v, k]) =>
  `<div class="h-[24px] flex"><span class="w-[120px] text-right leading-[23px] tracking-[-0.060px]">${n}</span>
   <span class="ml-[11px] w-[60px] h-[24px] bg-white border border-[#e2e3ea] border-t-[#abadb3] rounded-[1px] pl-[5px] leading-[18px]">${v}</span>
   <svg class="ml-[18px]" width="86" height="24"><path d="M.5 11v-2.500h83" fill="none" stroke="#a0a0a0"/><path d="M1 10.500h83.500v-2" fill="none" stroke="#fff"/><path d="M${k - 4.500} 4q0-1.500 1.500-1.500h6q1.500 0 1.500 1.500v10.500l-4.500 4.500l-4.500-4.500z" fill="url(#gThumb)" stroke="#707070"/></svg></div>`).join('');

// taskbar buttons: kind (1 and 2 stacked windows, 3 active), then artwork on a 58x38 canvas
const icons = [
 [0, '<circle cx="29" cy="19" r="14" fill="#fbc81c"/><path d="M29 19L16.900 12a14 14 0 0 1 24.200 0z" fill="#e03428"/><path d="M29 5a14 14 0 0 1 12.600 8h-13z" fill="#e03428"/><path d="M16.900 12a14 14 0 0 0 10 21l5-10z" fill="#3ca048"/><circle cx="29" cy="19" r="6.500" fill="#fff"/><circle cx="29" cy="19" r="5" fill="#3874c8"/>'],
 [0, '<path d="M16 8h22v22h-22zM38 9l4 1v21l-4-1z" fill="#98c8e8" stroke="#5088b0"/><path d="M40 9v22" stroke="#fff"/><circle cx="25" cy="20" r="8.500" fill="#f07820" stroke="#fff" stroke-opacity=".5"/><path d="M22 14.500l8 5.500l-8 5.500z" fill="#fff"/>'],
 [1, '<circle cx="21" cy="13" r="4" fill="#4c9c50"/><path d="M15 28q0-11 7-10q5 1 5 12h-10z" fill="#5cac60"/><circle cx="32" cy="13" r="4.500" fill="#98c8f0"/><path d="M25 29q0-11 7-11t8 11z" fill="#88b8e4"/><path d="M13 20q-4 4 4 6q10 2 22-4q3-2 2-6" stroke="#e8a848" fill="none" stroke-width="2.500"/><rect x="29" y="22" width="10" height="10" fill="#4ce010" stroke="#206c08"/>'],
 [0, '<path d="M18 8l12 2l-3 16l-13-3z" fill="#a8e0a0" stroke="#80b878" stroke-width=".6"/><path d="M22 9l13 2l-2 17l-13-2z" fill="#a8c8ec" stroke="#80a0c8" stroke-width=".6"/><path d="M26 17l15-5l5 13l-15 6z" fill="#fce468" stroke="#d8b840" stroke-width=".6"/>'],
 [0, '<circle cx="23" cy="13" r="8.500" fill="#00a8e8"/><circle cx="36" cy="26" r="8.500" fill="#00a8e8"/><circle cx="29.500" cy="19.500" r="13" fill="#00a8e8"/><text x="29.500" y="27.500" text-anchor="middle" font-size="23" font-weight="bold" fill="#fff">S</text>'],
 [0, '<path d="M15 4h29l-1 31h-27z" fill="#d0d4d4" stroke="#808888"/><rect x="19" y="7" width="21" height="20" fill="#585c60"/><rect x="20" y="11" width="9" height="15" fill="#1470b8"/><rect x="34" y="29" width="6" height="3" rx="1" fill="#8cb8d8"/>'],
 [2, '<path d="M11 12l2-5h9l2 2h18v22h-31z" fill="#e8d07c" stroke="#b09040"/><rect x="14" y="7" width="5" height="3" fill="#20a020"/><rect x="23" y="9" width="6" height="3" fill="#d83020"/><rect x="32" y="11" width="8" height="3" fill="#3c98d8"/><rect x="11" y="14" width="31" height="17" fill="#f4e49c"/><path d="M14 34v-9q0-3 3-3h18q3 0 3 3v9h-6v-6h-12v6z" fill="#90d0e8" stroke="#4c98b8"/>'],
 [0, '<path d="M15 19l21-15l6 2v26l-6 3z" fill="#222" stroke="#ddd"/><path d="M21 17l12-8v8zM21 21l12 8v-8zM36 13l4-5v20l-4-7z" fill="#fff"/><path d="M26 19l9-5v11z" fill="#eee"/>'],
 [0, '<rect x="15.500" y="4.500" width="27" height="26" fill="#1c1450" stroke="#78b8f8" stroke-width="1.500"/><text x="29" y="23" text-anchor="middle" font-size="15" font-weight="bold" fill="#90c8fc">Ps</text>'],
 [0, '<path d="M28 4q12 2 14 14q-2 12-14 15z" fill="#a0a4a8" stroke="#666"/><ellipse cx="26" cy="19" rx="11.500" ry="14.500" fill="#d8dcdc" stroke="#707478"/><ellipse cx="26" cy="19" rx="8.500" ry="11" fill="#a8b0b4" stroke="#f4f4f4"/><circle cx="30" cy="18" r="4.500" fill="#e4e8e8" stroke="#889"/>'],
 [0, '<path d="M20 13l6-5l16 22l-3 3z" fill="#a8a8a8" stroke="#666"/><circle cx="19" cy="9" r="6" fill="#383838"/><path d="M41 32l4 1v-13" stroke="#444" fill="none" stroke-width="1.500"/><circle cx="27" cy="16" r="1.500" fill="#e02020"/>'],
 [3, '<path d="M18 20a11 12 0 0 1 22 0" fill="none" stroke="#10108c" stroke-width="3.500"/><path d="M21 18q8-6 16 0v12q-8 4-16 0z" fill="#ffb400"/><path d="M21 24l3-3 2 6 3-9 2 8 3-4 3 2" stroke="#e83800" stroke-width="2" fill="none"/><rect x="14" y="18" width="7" height="13" rx="3" fill="#14149c"/><rect x="37" y="18" width="7" height="13" rx="3" fill="#14149c"/>'],
 [0, '<rect x="15" y="5" width="28" height="26" fill="#f2f2f2"/><rect x="15" y="5" width="26" height="2.500" fill="#c80c0c"/><rect x="14" y="5" width="2" height="26" fill="#444"/><path d="M28.500 10.500q-2.500-1.500-1 3q2 6 6 10q4 2 6 1q2-3-6-2.500q-7 .5-12 4q-3 3-1 3q3-1 6-8q3-7 2-10.500" fill="none" stroke="#d41414" stroke-width="1.400"/>']];
$('#tasks').innerHTML = icons.map(([s, art]) => {
  const on = s === 3, n = on ? 0 : s, bw = n === 1 ? 53 : n === 2 ? 50 : 58;
  return `<svg width="58" height="40"><g transform="translate(0 1)">${n > 1 ? '<rect x="6" y=".5" width="51" height="37" rx="2" fill="#fff" fill-opacity=".1" stroke="#f0c0dc" stroke-opacity=".6"/><rect x="3" y=".5" width="51" height="37" rx="2" fill="#8c4878" stroke="#f0c0dc" stroke-opacity=".6"/>' : n ? '<rect x="5" y=".5" width="52" height="37" rx="2" fill="#fff" fill-opacity=".1" stroke="#f0c0dc" stroke-opacity=".7"/>' : ''}
  <rect x=".5" y=".5" width="${bw - 1}" height="37" rx="2.500" fill="${on ? '#f8dcec' : '#ffb8dc'}" fill-opacity="${on ? .75 : .2}" stroke="#f8d0e8" stroke-opacity=".85"/><path d="M1 30V3q0-2 2-2h${bw - 6}q-6 22-${bw - 3} 29z" fill="#fff" opacity=".22"/>
  <path d="M-.5 0v38" stroke="#4c1c40"/>${art}</g></svg>`;
}).join('');
</script>
</body>
</html>
